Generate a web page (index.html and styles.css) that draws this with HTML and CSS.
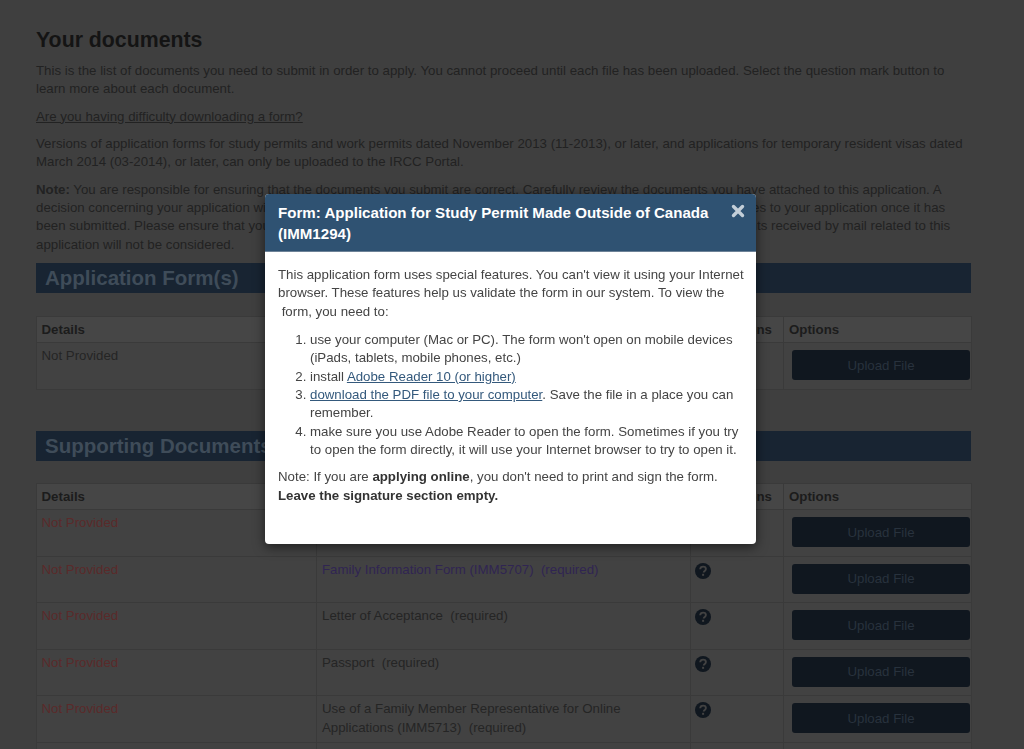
FILE: index.html
```html
<!DOCTYPE html>
<html lang="en">
<head>
    <meta charset="UTF-8">
    <meta name="viewport" content="width=device-width, initial-scale=1.0">
    <title>Your documents</title>
    <link rel="stylesheet" href="styles.css">
</head>
<body>
    <svg class="icon-defs" width="0" height="0">
        <symbol id="icon-help" viewBox="0 0 16 16">
            <circle cx="8" cy="8" r="8" fill="#10171f"/>
            <path d="M5.2 6.2c.1-1.6 1.3-2.6 2.9-2.6 1.600 0 2.800 1 2.800 2.400 0 1.200-.7 1.700-1.400 2.200-.5.400-.8.600-.8 1.300" fill="none" stroke="#424242" stroke-width="1.900"/>
            <rect x="7.100" y="10.800" width="2" height="2" fill="#424242"/>
        </symbol>
    </svg>

    <main class="page">
        <h1>Your documents</h1>
        <p>This is the list of documents you need to submit in order to apply. You cannot proceed until each file has been uploaded. Select the question mark button to learn more about each document.</p>
        <p><a href="#">Are you having difficulty downloading a form?</a></p>
        <p>Versions of application forms for study permits and work permits dated November 2013 (11-2013), or later, and applications for temporary resident visas dated March 2014 (03-2014), or later, can only be uploaded to the IRCC Portal.</p>
        <p><strong>Note:</strong> You are responsible for ensuring that the documents you submit are correct. Carefully review the documents you have attached to this application. A decision concerning your application will be made based on what you submit here, and you will not be able to make changes to your application once it has been submitted. Please ensure that you upload everything which we have requested from you here today, as any documents received by mail related to this application will not be considered.</p>

        <h2 class="band">Application Form(s)</h2>
        <table class="docs">
            <thead>
                <tr><th class="col-details">Details</th><th class="col-name">Document</th><th class="col-help">Instructions</th><th class="col-options">Options</th></tr>
            </thead>
            <tbody>
                <tr>
                    <td class="plain">Not Provided</td>
                    <td><a href="#">Application for Study Permit (IMM1294)</a> (required)</td>
                    <td></td>
                    <td class="options"><button class="upload">Upload File</button></td>
                </tr>
            </tbody>
        </table>

        <h2 class="band band-second">Supporting Documents</h2>
        <table class="docs">
            <thead>
                <tr><th class="col-details">Details</th><th class="col-name">Document</th><th class="col-help">Instructions</th><th class="col-options">Options</th></tr>
            </thead>
            <tbody>
                <tr>
                    <td class="missing">Not Provided</td>
                    <td>Proof of Means of Financial Support (required)</td>
                    <td></td>
                    <td class="options"><button class="upload">Upload File</button></td>
                </tr>
                <tr>
                    <td class="missing">Not Provided</td>
                    <td><a class="visited" href="#">Family Information Form (IMM5707)</a>&nbsp; <span class="visited">(required)</span></td>
                    <td><svg class="help"><use href="#icon-help"/></svg></td>
                    <td class="options"><button class="upload">Upload File</button></td>
                </tr>
                <tr>
                    <td class="missing">Not Provided</td>
                    <td>Letter of Acceptance &nbsp;(required)</td>
                    <td><svg class="help"><use href="#icon-help"/></svg></td>
                    <td class="options"><button class="upload">Upload File</button></td>
                </tr>
                <tr>
                    <td class="missing">Not Provided</td>
                    <td>Passport &nbsp;(required)</td>
                    <td><svg class="help"><use href="#icon-help"/></svg></td>
                    <td class="options"><button class="upload">Upload File</button></td>
                </tr>
                <tr>
                    <td class="missing">Not Provided</td>
                    <td>Use of a Family Member Representative for Online Applications (IMM5713) &nbsp;(required)</td>
                    <td><svg class="help"><use href="#icon-help"/></svg></td>
                    <td class="options"><button class="upload">Upload File</button></td>
                </tr>
                <tr>
                    <td></td>
                    <td></td>
                    <td><svg class="help"><use href="#icon-help"/></svg></td>
                    <td></td>
                </tr>
            </tbody>
        </table>
    </main>

    <div class="backdrop">
        <div class="modal">
            <div class="modal-header">
                <h3>Form: Application for Study Permit Made Outside of Canada (IMM1294)</h3>
                <svg class="close" viewBox="0 0 14 14" width="14" height="14">
                    <path d="M2.500 2.500l9 9M11.500 2.500l-9 9" stroke="#c3ced8" stroke-width="3.400" stroke-linecap="round"/>
                </svg>
            </div>
            <div class="modal-body">
                <p>This application form uses special features. You can't view it using your Internet browser. These features help us validate the form in our system. To view the<br>&nbsp;form, you need to:</p>
                <ol>
                    <li>use your computer (Mac or PC). The form won't open on mobile devices (iPads, tablets, mobile phones, etc.)</li>
                    <li>install <a href="#">Adobe Reader 10 (or higher)</a></li>
                    <li><a href="#">download the PDF file to your computer</a>. Save the file in a place you can remember.</li>
                    <li>make sure you use Adobe Reader to open the form. Sometimes if you try to open the form directly, it will use your Internet browser to try to open it.</li>
                </ol>
                <p>Note: If you are <strong>applying online</strong>, you don't need to print and sign the form. <strong>Leave the signature section empty.</strong></p>
            </div>
        </div>
    </div>
</body>
</html>
```

FILE: styles.css
```css
html, body {
    height: 100%;
    overflow: hidden;
}

body {
    margin: 0;
    background-color: #3f3f3f;
    color: #222;
    font-family: "Liberation Sans", Arial, sans-serif;
    font-size: 13.28px;
    line-height: 18.33px;
}

.icon-defs {
    position: absolute;
}

.page {
    width: 935px;
    margin-left: 36px;
    padding-top: 28px;
}

h1 {
    margin: 0 0 9px;
    font-size: 21.3px;
    line-height: 25px;
    color: #141414;
}

.page p {
    margin: 0 0 9px;
}

.page a {
    color: #222;
}

.band {
    margin: 0 0 23px;
    padding: 0 9px;
    height: 30.5px;
    line-height: 30px;
    font-size: 20.5px;
    background-color: #182432;
    color: #3f4c59;
}

.band-second {
    margin-top: 41px;
    margin-bottom: 22px;
}

.docs {
    width: 935px;
    table-layout: fixed;
    border-collapse: collapse;
}

.docs th {
    height: 26px;
    padding: 0 5px;
    text-align: left;
    background-color: #464646;
    color: #1c1c1c;
    box-sizing: border-box;
}

.docs th,
.docs td {
    border: 1px solid #3a3a3a;
}

.docs td {
    height: 46.500px;
    padding: 4px 5px;
    vertical-align: top;
    background-color: #424242;
    color: #252525;
    box-sizing: border-box;
}

.docs th:first-child,
.docs td:first-child {
    padding-left: 4.500px;
}

.col-details { width: 280px; }
.col-name { width: 374px; }
.col-help { width: 93px; }
.col-options { width: 188px; }

.docs td.missing {
    color: #5a2a2a;
}

.docs td.plain {
    color: #252525;
}

.docs .visited {
    color: #302552;
    text-decoration: none;
}

.docs td.options {
    padding: 7px 0 0 8px;
}

.upload {
    display: block;
    width: 178px;
    height: 30px;
    border: 0;
    border-radius: 3px;
    background-color: #10171f;
    color: #28323d;
    font-family: inherit;
    font-size: 13.28px;
}

.help {
    display: block;
    width: 16px;
    height: 16px;
    margin: 2px 0 0 -1px;
}

/* dim layer and dialog */
.backdrop {
    position: fixed;
    top: 0;
    left: 0;
    right: 0;
    bottom: 0;
}

.modal {
    position: absolute;
    top: 194px;
    left: 265px;
    width: 491px;
    height: 350px;
    border-radius: 4px;
    background-color: #fff;
    color: #444;
    box-shadow: 0 3px 12px rgba(0, 0, 0, 0.55);
    overflow: hidden;
}

.modal-header {
    display: flex;
    justify-content: space-between;
    height: 58px;
    box-sizing: border-box;
    padding: 8px 11px 0 13px;
    background-color: #2f5272;
    border-bottom: 1px solid #6d8297;
}

.modal-header h3 {
    margin: 0;
    width: 445px;
    font-size: 15.100px;
    line-height: 21px;
    color: #fff;
}

.close {
    margin-top: 2px;
}

.modal-body {
    padding: 14px 9px 0 13px;
}

.modal-body p {
    margin: 0 0 10px;
}

.modal-body ol {
    margin: 0 0 9px;
    padding-left: 32px;
}

.modal-body li:first-child,
.modal-body li:last-child {
    padding-right: 3px;
}

.modal-body a {
    color: #34597c;
}

.modal-body strong {
    color: #333;
}
```
